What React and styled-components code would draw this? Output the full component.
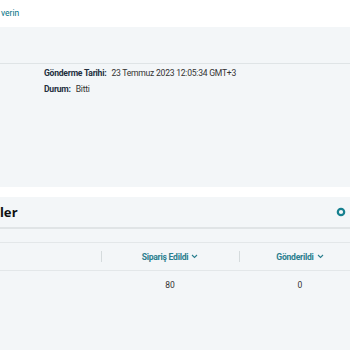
import React from "react";
import styled, { createGlobalStyle } from "styled-components";

const Global = createGlobalStyle`
  html, body { margin: 0; padding: 0; }
  body {
    background: #f3f6f8;
    font-family: Roboto, "Noto Sans", sans-serif;
    color: #0f1111;
    overflow: hidden;
    width: 350px;
    height: 350px;
  }
`;

const Page = styled.div`
  display: flex;
  flex-direction: column;
  width: 350px;
`;

const TopBar = styled.div`
  height: 27px;
  background: #ffffff;
  display: flex;
  align-items: center;
`;

const Link = styled.a`
  color: #007185;
  font-size: 8.5px;
  text-decoration: none;
  padding-left: 1px;
  margin-top: -1px;
`;

const SectionHead = styled.div`
  height: 36px;
  border-bottom: 1px solid #dfe4e6;
`;

const Details = styled.div`
  display: flex;
  flex-direction: column;
  gap: 5px;
  padding: 4px 0 0 44px;
  height: 119px;
`;

const DetailRow = styled.div`
  display: flex;
  gap: 5px;
  font-size: 8.6px;
  letter-spacing: -0.25px;
  line-height: 11px;
  color: #0f1111;
`;

const Label = styled.span`
  font-weight: 700;
  color: #232f3e;
`;

const Value = styled.span`
  color: #333;
`;

const Gap = styled.div`
  height: 10px;
  background: #ffffff;
`;

const CardHeader = styled.div`
  height: 30px;
  display: flex;
  align-items: center;
  justify-content: space-between;
  border-bottom: 2px solid #e0e4e6;
  padding-right: 4px;
`;

const Title = styled.h2`
  margin: 0;
  font-size: 13px;
  font-weight: 700;
  color: #0f1111;
  font-family: "Noto Sans", sans-serif;
`;

const Spacer = styled.div`
  height: 13px;
`;

const Table = styled.div`
  display: grid;
  grid-template-columns: 101px 138px 122px;
`;

const HeadCell = styled.div`
  height: 27px;
  border-top: 1px solid #e3e7e9;
  border-bottom: 1px solid #e3e7e9;
  display: flex;
  align-items: center;
  justify-content: center;
  position: relative;
  color: #2a7e8e;
  font-weight: 700;
  font-size: 8.6px;
  letter-spacing: -0.25px;
  gap: 3px;
  ${(p) =>
    p.$sep &&
    `&::before {
      content: "";
      position: absolute;
      left: 0;
      top: 8px;
      height: 11px;
      width: 1px;
      background: #d5dbdd;
    }`}
`;

const Cell = styled.div`
  height: 27px;
  display: flex;
  align-items: center;
  justify-content: center;
  font-size: 8.5px;
  color: #333;
`;

const Chevron = () => (
  <svg width="7" height="5" viewBox="0 0 7 5">
    <path d="M1 1l2.5 2.5L6 1" fill="none" stroke="#2a7e8e" strokeWidth="1.1" />
  </svg>
);

const Ring = () => (
  <svg width="10" height="10" viewBox="0 0 10 10">
    <circle cx="5" cy="5" r="3.2" fill="none" stroke="#16808f" strokeWidth="2.2" />
  </svg>
);

export default function App() {
  return (
    <>
      <Global />
      <Page>
        <TopBar>
          <Link href="#">verin</Link>
        </TopBar>
        <SectionHead />
        <Details>
          <DetailRow>
            <Label>Gönderme Tarihi:</Label>
            <Value>23 Temmuz 2023 12:05:34 GMT+3</Value>
          </DetailRow>
          <DetailRow>
            <Label>Durum:</Label>
            <Value>Bitti</Value>
          </DetailRow>
        </Details>
        <Gap />
        <CardHeader>
          <Title>ler</Title>
          <Ring />
        </CardHeader>
        <Spacer />
        <Table>
          <HeadCell />
          <HeadCell $sep>
            Sipariş Edildi <Chevron />
          </HeadCell>
          <HeadCell $sep>
            Gönderildi <Chevron />
          </HeadCell>
          <Cell />
          <Cell>80</Cell>
          <Cell>0</Cell>
        </Table>
      </Page>
    </>
  );
}
